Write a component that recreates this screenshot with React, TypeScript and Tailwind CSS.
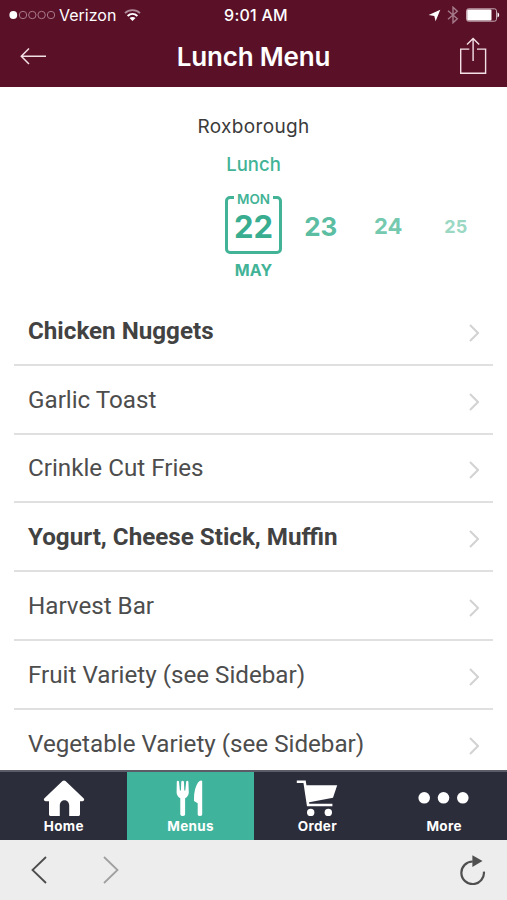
import clsx from "clsx";

const menuItems = [
  { name: "Chicken Nuggets", main: true },
  { name: "Garlic Toast", main: false },
  { name: "Crinkle Cut Fries", main: false },
  { name: "Yogurt, Cheese Stick, Muffin", main: true },
  { name: "Harvest Bar", main: false },
  { name: "Fruit Variety (see Sidebar)", main: false },
  { name: "Vegetable Variety (see Sidebar)", main: false },
];

// Days fade and shrink the further they are from the selected one
const nextDays = [
  { day: "23", className: "text-[26px] text-[#5bbda1]" },
  { day: "24", className: "text-[22px] text-[#74c9ae]" },
  { day: "25", className: "text-[18px] text-[#9ad8c4]" },
];

const StatusBar = () => (
  <div className="grid h-[30px] grid-cols-3 items-center text-white">
    <div className="flex items-center pl-[9px]">
      <svg width="47" height="10" viewBox="0 0 47 10" fill="none">
        <circle cx="4.3" cy="5" r="3.9" fill="#fff" />
        {[14, 23.3, 32.6, 42].map((cx) => (
          <circle key={cx} cx={cx} cy="5" r="3.7" stroke="#a8788a" strokeWidth="1" />
        ))}
      </svg>
      <span className="ml-[3px] w-[58px] text-[16px] leading-none">Verizon</span>
      <svg className="ml-[7px]" width="17" height="13" viewBox="0 0 17 13" fill="none">
        <path d="M1 4.2C5 .2 12 .2 16 4.2" stroke="#b08a98" strokeWidth="1.8" />
        <path d="M3.6 7C6.5 4.4 10.5 4.4 13.4 7" stroke="#fff" strokeWidth="2" />
        <path d="M8.5 12 5.5 9.1c1.8-1.5 4.2-1.5 6 0z" fill="#fff" />
      </svg>
    </div>
    <span className="pl-[5px] text-center text-[16px] leading-none font-medium tracking-[0.25px]">9:01 AM</span>
    <div className="flex items-center justify-end pr-[7px]">
      <svg width="13" height="13" viewBox="0 0 13 13">
        <path d="M12.3.7 7.6 12.2 6.3 6.9 .6 6z" fill="#fff" />
      </svg>
      <svg className="ml-[6px]" width="12" height="18" viewBox="0 0 12 18" fill="none" stroke="#a57a8a" strokeWidth="1.4">
        <path d="M1 4.8 10.3 12.8 6 16.8V1.2l4.3 4L1 13.2" />
      </svg>
      <svg className="ml-[7px]" width="34" height="14" viewBox="0 0 34 14">
        <rect x=".5" y=".8" width="30" height="12.4" rx="2" fill="none" stroke="#c6a9b4" />
        <rect x="1.2" y="1.4" width="24.3" height="11.2" rx="1" fill="#fff" />
        <path d="M31.5 4.6c2.2.6 2.2 4.2 0 4.8z" fill="#fff" />
      </svg>
    </div>
  </div>
);

const TitleBar = () => (
  <div className="flex h-[57px] items-center justify-between pr-[20px] pb-[4px] pl-[20px]">
    <svg className="-mt-[2px]" width="27" height="18" viewBox="0 0 27 18" fill="none" stroke="#f3dfe6" strokeWidth="1.5">
      <path d="M26 9.2H1.3M9 1.5 1.3 9.2 9 17" />
    </svg>
    <h1 className="pl-[1px] text-[26px] leading-none font-semibold tracking-[-0.2px] text-white">Lunch Menu</h1>
    <svg className="-mt-[1px]" width="28" height="38" viewBox="0 0 28 38" fill="none" stroke="#f3dfe6" strokeWidth="1.4">
      <path d="M10.3 12.1H1.7V36.3H26.6V12.1H18M14.1 24V1.8M8 7.6 14.1 1.6 20.2 7.6" />
    </svg>
  </div>
);

const DatePicker = () => (
  <div className="flex pl-[220px]">
    <div className="w-[67px]">
      <div className="relative mx-auto mt-[20px] h-[58px] w-[57px] rounded-[5px] border-[3px] border-[#42b396] text-center">
        <span className="absolute -top-[7px] left-[6px] w-[39px] bg-white text-[13.5px] leading-[15px] font-semibold text-[#42b396]">
          MON
        </span>
        <span className="mt-[9px] block text-[31px] leading-[38px] font-bold text-[#38ad90]">22</span>
      </div>
      <p className="mt-[6px] text-center text-[16px] leading-[20px] font-bold text-[#42b396]">MAY</p>
    </div>
    {nextDays.map(({ day, className }) => (
      <div key={day} className={clsx("mt-[21px] flex h-[59px] w-[67.5px] items-center justify-center font-bold", className)}>
        {day}
      </div>
    ))}
  </div>
);

const MenuList = () => (
  <ul className="mx-[14px] mt-[17px]">
    {menuItems.map(({ name, main }) => (
      <li
        key={name}
        className="flex h-[68.8px] items-center justify-between border-b-2 border-[#e0e0e0] pr-[14px] pl-[14px] font-['Roboto',sans-serif] text-[24.2px] text-[#4d4d4d]"
      >
        <span className={clsx("mt-[1px] whitespace-nowrap", main && "font-bold text-[#424242]")}>{name}</span>
        <svg className="mt-[5px]" width="10" height="18" viewBox="0 0 10 18" fill="none" stroke="#d2d2d2" strokeWidth="2">
          <path d="M1 1 9 9 1 17" />
        </svg>
      </li>
    ))}
  </ul>
);

const tabs = [
  {
    label: "Home",
    icon: (
      <svg className="ml-[2px]" width="42" height="37" viewBox="0 0 42 37" fill="#fff">
        <path d="M19.5 1Q21 0 22.5 1L40.8 18.6Q42 20.8 39.6 21.2H37V34.6Q37 36 35.6 36H26.2V25.4C26 18.4 17 18.4 16.8 25.4V36H7.4Q6 36 6 34.6V21.2H2.6Q0 20.8 1.2 18.6z" />
      </svg>
    ),
  },
  {
    label: "Menus",
    icon: (
      <svg width="28" height="37" viewBox="0 0 28 37" fill="#fff">
        <path d="M.8 1.4Q1.9.2 3 1.4L3.9 10.6H4.9L5.3 1.4Q6.6.2 7.9 1.4L8.3 10.6H9.3L10.2 1.4Q11.3.2 12.4 1.4L12.8 12.5Q12.6 16.4 9.1 18.2V34.5Q8.8 36 6.7 36 4.6 36 4.3 34.5V18.2Q.8 16.4.6 12.5z" />
        <path d="M26.2 1V34.5Q26 36 23.9 36 21.9 36 21.7 34.5V23.2L18 21Q17.6 8.5 22.2 2.2 24.6-.4 26.2 1z" />
      </svg>
    ),
  },
  {
    label: "Order",
    icon: (
      <svg width="42" height="37" viewBox="0 0 42 37">
        <path d="M.8 1.8H8.6L12.1 25H36.4" fill="none" stroke="#fff" strokeWidth="2.6" />
        <path d="M9.2 5.2H41.2L37 17.8 12 22.6z" fill="#fff" />
        <circle cx="14.7" cy="32.4" r="3.7" fill="#fff" />
        <circle cx="32.3" cy="32.4" r="3.7" fill="#fff" />
      </svg>
    ),
  },
  {
    label: "More",
    icon: (
      <svg width="51" height="37" viewBox="0 0 51 37" fill="#fff">
        <circle cx="6.2" cy="17.8" r="5.8" />
        <circle cx="25.5" cy="17.8" r="5.8" />
        <circle cx="44.8" cy="17.8" r="5.8" />
      </svg>
    ),
  },
];

const TabBar = () => (
  <nav className="grid h-[70px] shrink-0 grid-cols-4 border-t-2 border-[#5c5c68] bg-[#2b2d3b]">
    {tabs.map(({ label, icon }) => (
      <div
        key={label}
        className={clsx("flex flex-col items-center pt-[8px] text-white", label === "Menus" && "bg-[#40b39c]")}
      >
        {icon}
        <span className="mt-[1px] pl-[1px] text-[13.5px] leading-[17px] font-bold tracking-[0.35px]">{label}</span>
      </div>
    ))}
  </nav>
);

const BrowserBar = () => (
  <div className="flex h-[60px] shrink-0 items-center bg-[#ededed] pr-[21px] pl-[31px]">
    <svg width="16" height="28" viewBox="0 0 16 28" fill="none" stroke="#4c4c4c" strokeWidth="1.8">
      <path d="M15 1 1.5 14 15 27" />
    </svg>
    <svg className="ml-[56px]" width="16" height="28" viewBox="0 0 16 28" fill="none" stroke="#a0a0a0" strokeWidth="1.8">
      <path d="M1 1 14.5 14 1 27" />
    </svg>
    <svg className="ml-auto" width="27" height="30" viewBox="0 0 27 30">
      <path d="M13.8 6.5A11.3 11.3 0 1 0 24.9 16.6" fill="none" stroke="#4f4f4f" strokeWidth="2.2" />
      <path d="M13.4.3 23.5 6 13.4 12z" fill="#4f4f4f" />
    </svg>
  </div>
);

const App = () => {
  return (
    <div className="flex h-[900px] w-[507px] flex-col overflow-hidden bg-white font-['Inter',sans-serif]">
      <header className="h-[87px] shrink-0 bg-[#5a1128]">
        <StatusBar />
        <TitleBar />
      </header>
      <main className="h-[683px] shrink-0 overflow-hidden">
        <p className="mt-[28px] text-center text-[19px] leading-[24px] tracking-[0.35px] text-[#3b3b3b]">Roxborough</p>
        <p className="mt-[13px] text-center text-[18.5px] leading-[24px] font-medium text-[#42b396]">Lunch</p>
        <DatePicker />
        <MenuList />
      </main>
      <TabBar />
      <BrowserBar />
    </div>
  );
};

export default App;
